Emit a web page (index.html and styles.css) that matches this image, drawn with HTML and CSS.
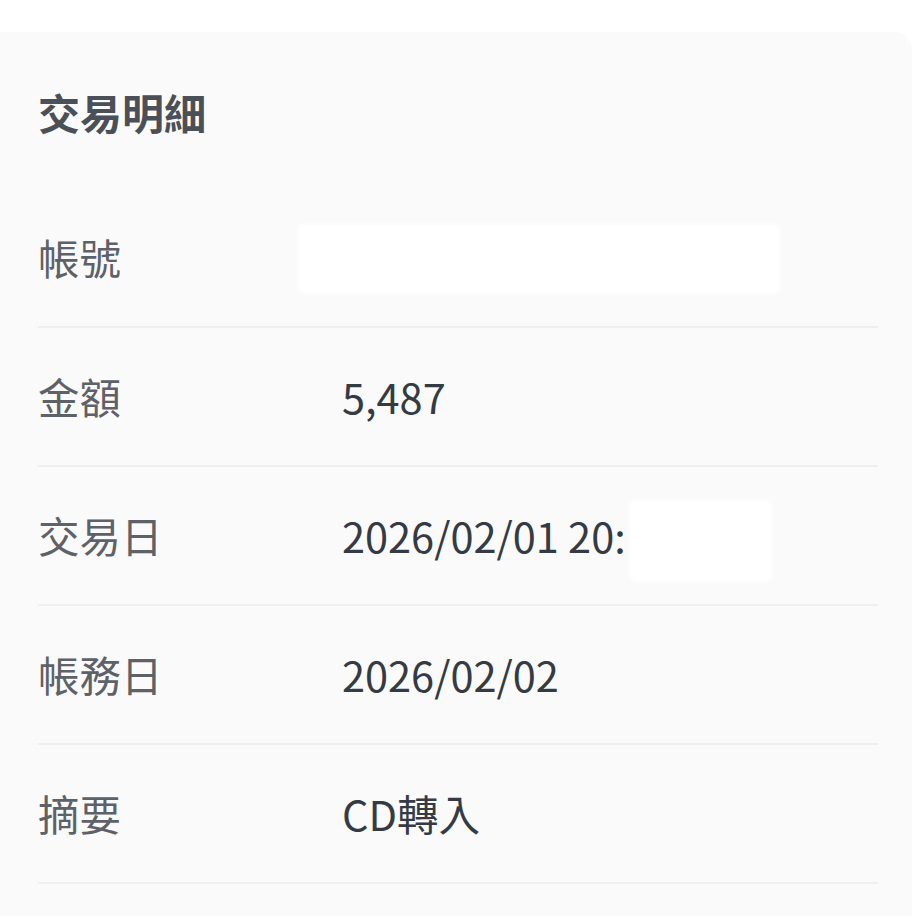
FILE: index.html
```html
<!DOCTYPE html>
<html lang="zh-Hant">
<head>
<meta charset="utf-8">
<link rel="stylesheet" href="styles.css">
</head>
<body>
<section class="card">
  <h2 class="title">交易明細</h2>
  <div class="row">
    <div class="label">帳號</div>
    <div class="value"><span class="mask mask-account"></span></div>
  </div>
  <div class="row">
    <div class="label">金額</div>
    <div class="value">5,487</div>
  </div>
  <div class="row">
    <div class="label">交易日</div>
    <div class="value">2026/02/01 20:<span class="mask mask-time"></span></div>
  </div>
  <div class="row">
    <div class="label">帳務日</div>
    <div class="value">2026/02/02</div>
  </div>
  <div class="row">
    <div class="label">摘要</div>
    <div class="value">CD轉入</div>
  </div>
</section>
</body>
</html>
```
FILE: styles.css
```css
html, body {
  margin: 0;
  padding: 0;
  background: #ffffff;
}
body {
  font-family: "Noto Sans CJK TC", "Noto Sans", sans-serif;
}
.card {
  margin: 32px 4px 0 0;
  background: #fafafa;
  border-radius: 0 18px 0 0;
  padding: 52px 34px 40px 38px;
  min-height: 860px;
  box-sizing: border-box;
}
.title {
  margin: 0 0 49px 0;
  font-size: 42px;
  line-height: 56px;
  font-weight: 700;
  color: #4b5058;
}
.row {
  display: flex;
  align-items: center;
  padding: 46px 0 47px 0;
  border-bottom: 2px solid #eeeeee;
  height: 44px;
}
.label {
  width: 304px;
  flex: none;
  font-size: 41.5px;
  line-height: 44px;
  color: #5d6168;
}
.value {
  font-size: 41.5px;
  line-height: 44px;
  color: #343b45;
  display: flex;
  align-items: center;
}
.mask {
  display: inline-block;
  background: #ffffff;
  filter: blur(2px);
  border-radius: 6px;
}
.mask-account {
  width: 482px;
  height: 70px;
  margin-left: -44px;
  margin-top: 4px;
}
.mask-time {
  width: 142px;
  height: 82px;
  margin-left: 4px;
  margin-top: 12px;
}
```
